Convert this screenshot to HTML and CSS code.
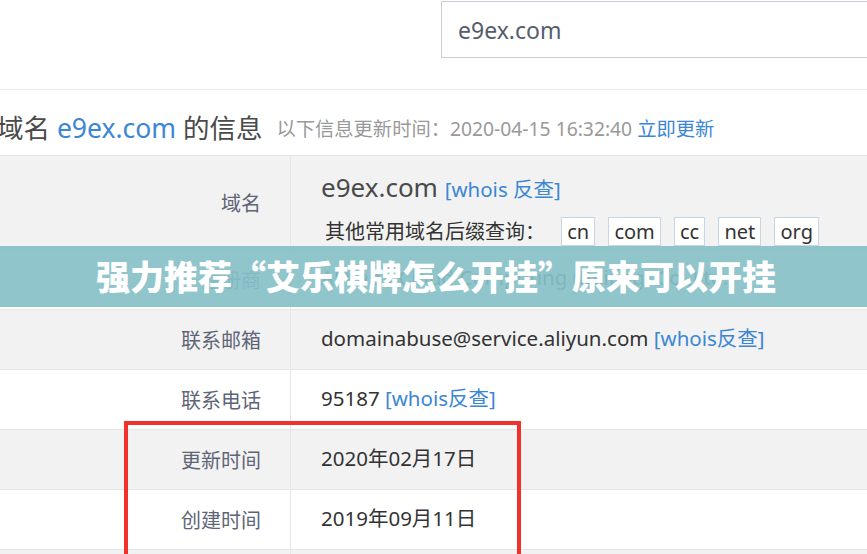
FILE: index.html
```html
<!DOCTYPE html>
<html>
  <head>
    <meta charset="utf-8" />
    <title>e9ex.com 的信息</title>
    <link rel="stylesheet" href="styles.css">
  </head>
  <body>
    <div class="page">
      <div class="searchBar">
        <div class="searchBox">e9ex.com</div>
      </div>
      <div class="heading">
        <span class="title">域名 <a href="#">e9ex.com</a> 的信息</span>
        <span class="updated">以下信息更新时间：2020-04-15 16:32:40 <a href="#">立即更新</a></span>
      </div>
      <table class="info">
        <tr class="tall">
          <th>域名</th>
          <td>
            <div class="domain">e9ex.com <a href="#">[whois 反查]</a></div>
            <div class="suffixes">
              <span>其他常用域名后缀查询：</span>
              <a class="tag" href="#">cn</a>
              <a class="tag" href="#">com</a>
              <a class="tag" href="#">cc</a>
              <a class="tag" href="#">net</a>
              <a class="tag" href="#">org</a>
            </div>
          </td>
        </tr>
        <tr>
          <th>注册商</th>
          <td>Alibaba Cloud Computing (Beijing) Co.,Ltd.</td>
        </tr>
        <tr>
          <th>联系邮箱</th>
          <td>domainabuse@service.aliyun.com <a href="#">[whois反查]</a></td>
        </tr>
        <tr>
          <th>联系电话</th>
          <td>95187 <a href="#">[whois反查]</a></td>
        </tr>
        <tr>
          <th>更新时间</th>
          <td>2020年02月17日</td>
        </tr>
        <tr>
          <th>创建时间</th>
          <td>2019年09月11日</td>
        </tr>
        <tr>
          <th>过期时间</th>
          <td>2020年09月11日</td>
        </tr>
      </table>
      <div class="highlight"></div>
      <div class="banner">强力推荐“艾乐棋牌怎么开挂”原来可以开挂</div>
    </div>
  </body>
</html>
```
FILE: styles.css
```css
html {
  background-color: white;
  color: #333;
  font-family: "Noto Sans", "Noto Sans CJK SC", sans-serif;
}
body {
  margin: 0;
}

a {
  color: #3b87d4;
  text-decoration: none;
}

.page {
  position: relative;
  width: 867px;
  height: 554px;
  overflow: hidden;
}

.searchBar {
  height: 88px;
  border-bottom: 1px solid #ebebeb;
  padding-top: 1px;
}

.searchBox {
  margin-left: 441px;
  width: 500px;
  height: 57px;
  border: 1px solid #c9ced8;
  box-sizing: border-box;
  padding-left: 16px;
  font-size: 23px;
  line-height: 57px;
  color: #555d6d;
}

.heading {
  height: 65px;
  display: flex;
  align-items: center;
  padding-top: 8px;
  box-sizing: border-box;
  margin-left: -3px;
  white-space: nowrap;
}

.title {
  font-size: 26.5px;
  color: #4a4a4a;
}

.updated {
  font-size: 19.3px;
  color: #999;
  margin-left: 14px;
  padding-top: 3px;
}

.info {
  width: 100%;
  border-collapse: collapse;
  border-top: 1px solid #e6e6e6;
}

.info tr {
  height: 60px;
  border-bottom: 1px solid #e6e6e6;
}

.info tr:nth-child(odd) {
  background-color: #f2f2f2;
}

.info tr.tall {
  height: 94px;
}

.info th {
  width: 261px;
  padding: 0 29px 0 0;
  text-align: right;
  font-weight: normal;
  font-size: 20px;
  color: #5e6576;
  border-right: 1px solid #e6e6e6;
}

.info td {
  padding: 0 0 6px 30px;
  font-size: 20.5px;
  color: #333;
}

.info tr.tall td {
  padding: 10px 0 0 30px;
}

.domain {
  font-size: 26px;
  line-height: 36px;
  color: #4a4a4a;
}

.domain a {
  font-size: 20.5px;
}

.suffixes {
  margin-top: 10px;
  font-size: 20px;
  line-height: 29px;
  padding-left: 4px;
}

.suffixes span {
  margin-right: 11px;
}

.tag {
  display: inline-block;
  border: 1px solid #c5d6e6;
  background-color: white;
  color: #333;
  padding: 0 5px;
  line-height: 27px;
  margin-right: 8px;
}

.highlight {
  position: absolute;
  left: 124px;
  top: 421px;
  width: 397px;
  height: 150px;
  border: 4px solid #f2302c;
  box-sizing: border-box;
}

.banner {
  position: absolute;
  left: 0;
  right: 0;
  top: 246px;
  height: 61px;
  background: rgba(135, 192, 200, 0.92);
  color: white;
  font-family: "Noto Sans CJK SC", sans-serif;
  font-weight: 900;
  font-size: 34px;
  line-height: 60px;
  padding-left: 96px;
}
```
